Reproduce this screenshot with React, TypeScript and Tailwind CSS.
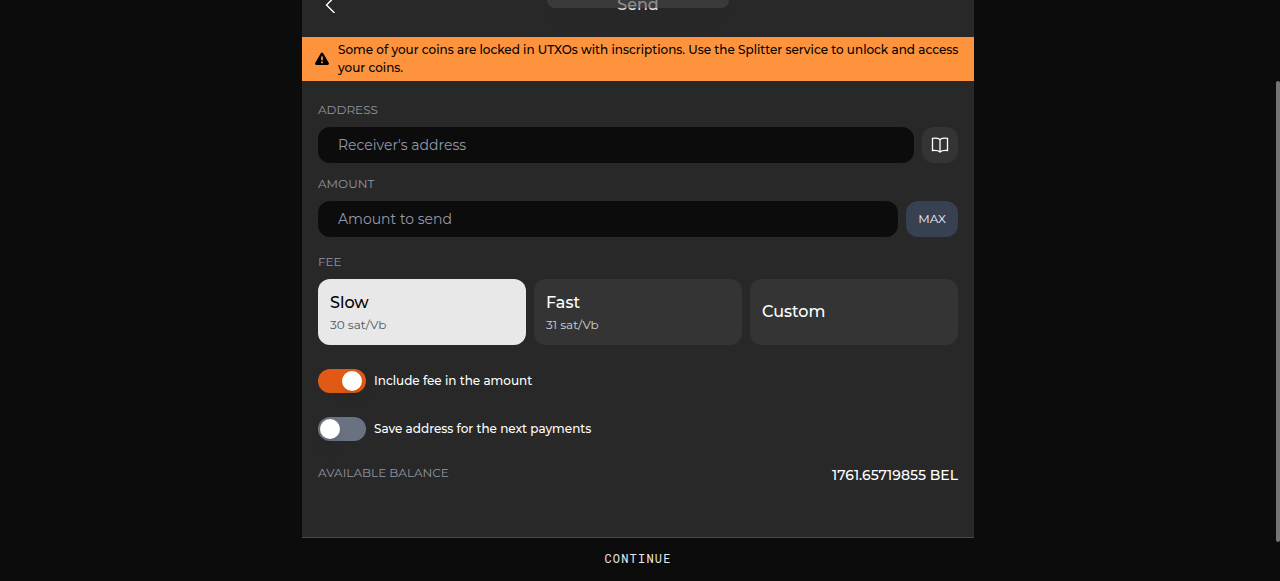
import { useState } from "react";

const fees = [
  { name: "Slow", rate: "30 sat/Vb" },
  { name: "Fast", rate: "31 sat/Vb" },
  { name: "Custom", rate: "" },
];

const labelClass = "block text-[12px] leading-4 text-[#9094a3] uppercase";
const fieldClass =
  "h-9 min-w-0 flex-1 rounded-xl bg-[#0c0c0c] px-5 text-[14px] text-white placeholder:text-[#9499a8] outline-none";

function Toggle({ id, label, initial }: { id: string; label: string; initial: boolean }) {
  const [on, setOn] = useState(initial);
  return (
    <div className="flex items-center gap-2">
      <input
        id={id}
        type="checkbox"
        role="switch"
        checked={on}
        onChange={(e) => setOn(e.target.checked)}
        className="h-6 w-12 shrink-0 cursor-pointer appearance-none rounded-full bg-gray-500 p-0.5 before:block before:size-5 before:rounded-full before:bg-white before:shadow-lg checked:bg-[#e05a15] checked:pl-6"
      />
      <label htmlFor={id} className="text-[12px] leading-5 font-medium text-white">
        {label}
      </label>
    </div>
  );
}

export default function App() {
  const [fee, setFee] = useState("Slow");
  return (
    <div className="flex min-h-screen justify-between overflow-hidden bg-[#0c0c0c] font-[Montserrat,Inter,sans-serif] text-white">
      <div className="relative mx-auto flex w-full max-w-2xl flex-col">
        <main className="flex flex-1 flex-col bg-[#282828]">
          <header className="-mt-2 mb-5 grid h-[25px] grid-cols-3 items-center">
            <button type="button" aria-label="Back" className="ml-5 w-4">
              <svg viewBox="0 0 16 16" className="size-4" fill="none" stroke="currentColor" strokeWidth="1.4">
                <path d="M12.500 0 4.500 8l8 8" />
              </svg>
            </button>
            <h1 className="text-center text-[16px] leading-6 font-medium text-[#e0e0e0]">Send</h1>
          </header>
          <p className="flex items-center gap-2 bg-[#fd943d] py-1 pr-2 pl-3 text-[12px] leading-[18px] font-medium text-black">
            <svg viewBox="0 0 16 16" className="size-4 shrink-0" aria-hidden="true">
              <path
                d="M8 1.500c.5 0 .9.2 1.200.7l5.500 9.600c.6 1-.1 2.100-1.200 2.100h-11c-1.100 0-1.800-1.100-1.200-2.100l5.500-9.600c.3-.5.7-.7 1.200-.7Z"
                fill="currentColor"
              />
              <path d="M8 5.500v3.700M8 10.500v1.700" stroke="#fd943d" strokeWidth="1.800" />
            </svg>
            <span>
              Some of your coins are locked in UTXOs with inscriptions. Use the Splitter service to unlock and access
              your coins.
            </span>
          </p>

          <form
            id="send"
            className="flex flex-1 flex-col px-4 pt-[21px] pb-12"
            onSubmit={(e) => e.preventDefault()}
          >
            <label htmlFor="address" className={labelClass}>
              Address
            </label>
            <div className="mt-[9px] flex gap-2">
              <input id="address" placeholder="Receiver's address" className={fieldClass} />
              <button
                type="button"
                aria-label="Address book"
                className="grid size-9 place-items-center rounded-xl bg-[#343434]"
              >
                <svg viewBox="0 0 18 18" className="size-[18px]" fill="none" stroke="currentColor" strokeWidth="1.300">
                  <path d="M9 3.500C7.500 2.400 4.500 2 1.500 2.300v12.200c3-.3 6 .1 7.500 1.500 1.500-1.400 4.500-1.800 7.500-1.500V2.300C13.500 2 10.500 2.400 9 3.500Z" />
                  <path d="M9 3.500V16" />
                </svg>
              </button>
            </div>

            <label htmlFor="amount" className={`${labelClass} mt-[13px]`}>
              Amount
            </label>
            <div className="mt-[9px] flex gap-2">
              <input id="amount" inputMode="decimal" placeholder="Amount to send" className={fieldClass} />
              <button type="button" className="h-9 w-13 rounded-xl bg-[#384152] text-[12px] text-[#f0f0f0]">
                MAX
              </button>
            </div>

            <fieldset className="mt-[17px]">
              <legend className={labelClass}>Fee</legend>
              <div className="mt-[9px] grid grid-cols-3 gap-2">
                {fees.map((f) => (
                  <button
                    key={f.name}
                    type="button"
                    aria-pressed={fee === f.name}
                    onClick={() => setFee(f.name)}
                    className={`flex h-[66px] flex-col items-start justify-center gap-0.5 rounded-xl px-3 pb-px ${
                      fee === f.name ? "bg-[#e8e8e8] text-black" : "bg-[#343434] text-white"
                    }`}
                  >
                    <span className="text-[16px] leading-6 font-medium">{f.name}</span>
                    {f.rate && (
                      <span
                        className={`text-[12px] leading-4 ${fee === f.name ? "text-[#4b5563]" : "text-[#d1d5db]"}`}
                      >
                        {f.rate}
                      </span>
                    )}
                  </button>
                ))}
              </div>
            </fieldset>

            <div className="mt-6 flex flex-col gap-6">
              <Toggle id="include-fee" label="Include fee in the amount" initial={true} />
              <Toggle id="save-address" label="Save address for the next payments" initial={false} />
            </div>

            <div className="mt-6 flex items-start justify-between">
              <span className={labelClass}>Available balance</span>
              <span className="text-[14px] leading-5 font-medium">1761.65719855 BEL</span>
            </div>
          </form>
        </main>
        <button
          type="submit"
          form="send"
          className="h-11 w-full border-t border-[#484848] bg-[#0c0c0c] pb-[3px] font-['Roboto_Mono','Liberation_Mono',monospace] text-xs tracking-widest text-[#e8e8e8]"
        >
          CONTINUE
        </button>
        <div className="absolute top-0 left-1/2 h-2 w-[182px] -translate-x-1/2 rounded-b-xl bg-[#484848]/55 shadow-lg" />
      </div>
      <div className="mt-[81px] h-[461px] w-1 rounded-full bg-[#757575]" />
    </div>
  );
}
